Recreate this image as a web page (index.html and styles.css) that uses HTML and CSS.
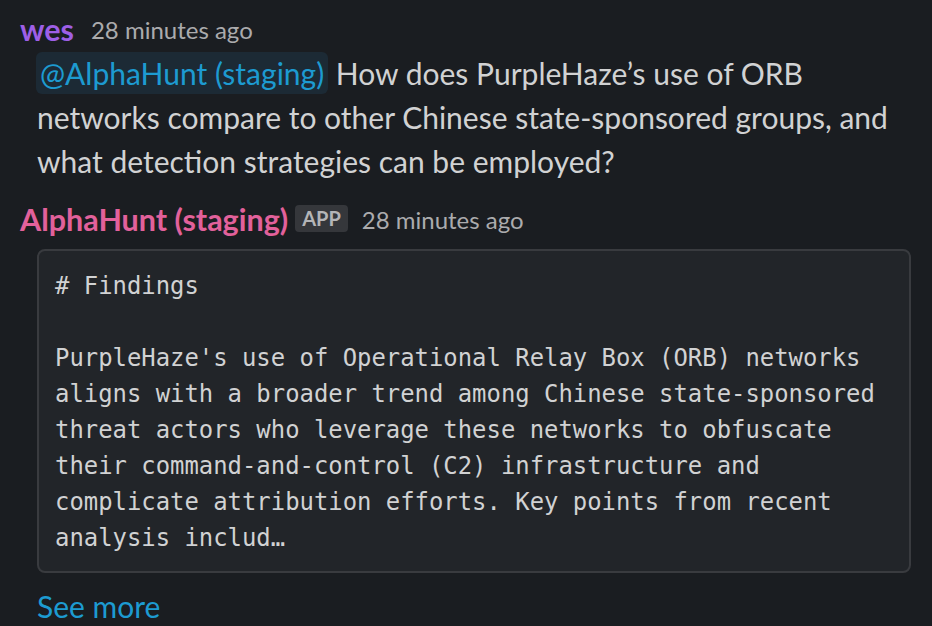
FILE: index.html
```html
<!DOCTYPE html>
<html>
<head>
<meta charset="utf-8">
<link rel="stylesheet" href="styles.css">
</head>
<body>
<div class="feed">
  <div class="msg">
    <div class="head">
      <span class="user user-wes">wes</span>
      <span class="time">28 minutes ago</span>
    </div>
    <div class="body">
      <p class="text"><span class="mention">@AlphaHunt (staging)</span> How does PurpleHaze’s use of ORB networks compare to other Chinese state-sponsored groups, and what detection strategies can be employed?</p>
    </div>
  </div>
  <div class="msg msg-app">
    <div class="head">
      <span class="user user-app">AlphaHunt (staging)</span>
      <span class="badge">APP</span>
      <span class="time">28 minutes ago</span>
    </div>
    <div class="body">
      <pre class="code"># Findings

PurpleHaze's use of Operational Relay Box (ORB) networks
aligns with a broader trend among Chinese state-sponsored
threat actors who leverage these networks to obfuscate
their command-and-control (C2) infrastructure and
complicate attribution efforts. Key points from recent
analysis includ…</pre>
      <a class="more">See more</a>
    </div>
  </div>
</div>
</body>
</html>
```

FILE: styles.css
```css
html, body {
  margin: 0;
  padding: 0;
  background: #1a1d21;
  overflow: hidden;
}
body {
  font-family: Lato, "Noto Sans", sans-serif;
  color: #d1d2d3;
}
.feed {
  padding: 7px 21px 0 20px;
}
.msg-app {
  margin-top: 14px;
}
.head {
  display: flex;
  align-items: center;
  height: 44px;
}
.user {
  font-size: 30.5px;
  font-weight: 700;
  margin-right: 17px;
}
.user-wes { color: #9e5fe6; }
.user-app { color: #e2619b; margin-right: 7px; }
.time {
  font-size: 24px;
  color: #ababad;
}
.badge {
  font-size: 20px;
  font-weight: 700;
  color: #b4b5b7;
  background: #35373b;
  border-radius: 4px;
  height: 27px;
  line-height: 27px;
  padding: 0 7px;
  margin-right: 14px;
  margin-top: -2px;
}
.body {
  margin-left: 17px;
}
.text {
  margin: 0;
  font-size: 30px;
  line-height: 44px;
}
.mention {
  color: #1d9bd1;
  background: #1c2a35;
  border-radius: 6px;
  padding: 3px 4px;
  margin-left: -1px;
}
.code {
  margin: 8px 0 0;
  font-family: "DejaVu Sans Mono", "Liberation Mono", monospace;
  font-size: 23.9px;
  line-height: 36px;
  color: #d1d2d3;
  background: #222529;
  border: 2px solid #393b3f;
  border-radius: 8px;
  padding: 17px 16px 15px;
  white-space: pre;
}
.more {
  display: block;
  margin-top: 11px;
  font-size: 30px;
  line-height: 44px;
  color: #1d9bd1;
}
```
